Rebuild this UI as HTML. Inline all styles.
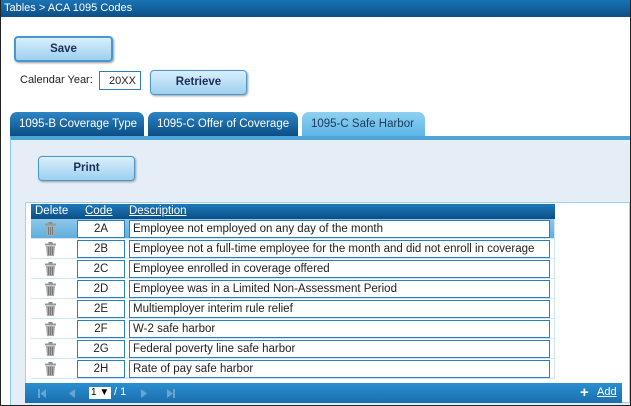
<!DOCTYPE html>
<html><head><style>
*{box-sizing:border-box;margin:0;padding:0}
body{width:631px;height:406px;position:relative;overflow:hidden;background:#fff;font-family:"Liberation Sans",sans-serif;font-size:11px;color:#222}
.frame{position:absolute;left:0;top:0;width:631px;height:406px;border:1px solid #222;border-top:none}
.hdr{position:absolute;left:0;top:0;width:631px;height:17px;background:linear-gradient(#1a73b5,#0b4f86);color:#fff;font-size:11px;padding:2px 4px}
.btn{position:absolute;border:2px solid #4a97cf;border-radius:4px;background:linear-gradient(#d9effb,#9dd0f0);color:#1c2d5a;font-weight:bold;font-size:11.5px;text-align:center;box-shadow:1px 1px 2px #999}
.a{position:absolute}
.tab{position:absolute;top:112px;height:24px;border-radius:7px 7px 0 0;background:linear-gradient(#2c85c4,#0b4e86);color:#fff;font-size:11.5px;padding:6px 0 0 9px}
.panel{position:absolute;left:10px;top:136px;width:621px;height:270px;background:#e5eef7;border-top:4px solid #4ea3d8;border-left:1px solid #8cc8ec}
.tbl{position:absolute;left:25px;top:202px;width:605px;height:201px;background:#fff;border:1px solid #9bd3f1}
.th{position:absolute;left:31px;top:204px;width:524px;height:15px;background:linear-gradient(#1e79ba,#0b4e86);color:#fff;font-size:11.5px}
.row{position:absolute;left:31px;width:524px;height:20px;border-bottom:1px solid #cfe6f5;border-right:1px solid #cfe6f5}
.cell{position:absolute;top:1px;height:18px;border:1px solid #2b7fc0;background:#fff;font-size:11.5px;padding:2px 3px 0}
.trash{position:absolute;left:14px;top:3px;width:11px;height:14px}
.foot{position:absolute;left:25px;top:383px;width:597px;height:20px;background:linear-gradient(#2a8fd0,#1a6eae);color:#fff}
</style></head><body>
<div class="hdr">Tables &gt; ACA 1095 Codes</div>
<div class="btn" style="left:14px;top:36px;width:99px;height:26px;padding-top:5px">Save</div>
<div class="a" style="left:20px;top:74px;font-size:11px">Calendar Year:</div>
<div class="a" style="left:99px;top:71px;width:42px;height:19px;border:1px solid #2b7fc0;font-size:11px;padding:3px 0 0 9px">20XX</div>
<div class="btn" style="left:150px;top:70px;width:97px;height:25px;padding-top:5px;border-width:1px">Retrieve</div>
<div class="tab" style="left:10px;width:134px">1095-B Coverage Type</div>
<div class="tab" style="left:148px;width:150px">1095-C Offer of Coverage</div>
<div class="tab" style="left:302px;width:123px;background:linear-gradient(#8fd0f2,#5db6e6);color:#1c3a5a">1095-C Safe Harbor</div>
<div class="panel"></div>
<div class="btn" style="left:38px;top:156px;width:97px;height:25px;padding-top:5px;border-width:1px">Print</div>
<div class="tbl"></div>
<div class="th"><span class="a" style="left:4px;top:1px">Delete</span><span class="a" style="left:54px;top:1px;text-decoration:underline">Code</span><span class="a" style="left:98px;top:1px;text-decoration:underline">Description</span></div>

<div class="row" style="top:219px;background:linear-gradient(#8ec8ea,#5faedd)"><svg class="trash" viewBox="0 0 11 14"><rect x="3.5" y="0" width="4" height="2" fill="#888"/><rect x="0" y="1.5" width="11" height="2" fill="#999"/><path d="M1 4h9l-1 10H2z" fill="#aaa"/><path d="M3.5 5v8M5.5 5v8M7.5 5v8" stroke="#777"/></svg><div class="cell" style="left:46px;width:48px;text-align:center">2A</div><div class="cell" style="left:98px;width:421px">Employee not employed on any day of the month</div></div>
<div class="row" style="top:239px"><svg class="trash" viewBox="0 0 11 14"><rect x="3.5" y="0" width="4" height="2" fill="#888"/><rect x="0" y="1.5" width="11" height="2" fill="#999"/><path d="M1 4h9l-1 10H2z" fill="#aaa"/><path d="M3.5 5v8M5.5 5v8M7.5 5v8" stroke="#777"/></svg><div class="cell" style="left:46px;width:48px;text-align:center">2B</div><div class="cell" style="left:98px;width:421px">Employee not a full-time employee for the month and did not enroll in coverage</div></div>
<div class="row" style="top:259px"><svg class="trash" viewBox="0 0 11 14"><rect x="3.5" y="0" width="4" height="2" fill="#888"/><rect x="0" y="1.5" width="11" height="2" fill="#999"/><path d="M1 4h9l-1 10H2z" fill="#aaa"/><path d="M3.5 5v8M5.5 5v8M7.5 5v8" stroke="#777"/></svg><div class="cell" style="left:46px;width:48px;text-align:center">2C</div><div class="cell" style="left:98px;width:421px">Employee enrolled in coverage offered</div></div>
<div class="row" style="top:279px"><svg class="trash" viewBox="0 0 11 14"><rect x="3.5" y="0" width="4" height="2" fill="#888"/><rect x="0" y="1.5" width="11" height="2" fill="#999"/><path d="M1 4h9l-1 10H2z" fill="#aaa"/><path d="M3.5 5v8M5.5 5v8M7.5 5v8" stroke="#777"/></svg><div class="cell" style="left:46px;width:48px;text-align:center">2D</div><div class="cell" style="left:98px;width:421px">Employee was in a Limited Non-Assessment Period</div></div>
<div class="row" style="top:299px"><svg class="trash" viewBox="0 0 11 14"><rect x="3.5" y="0" width="4" height="2" fill="#888"/><rect x="0" y="1.5" width="11" height="2" fill="#999"/><path d="M1 4h9l-1 10H2z" fill="#aaa"/><path d="M3.5 5v8M5.5 5v8M7.5 5v8" stroke="#777"/></svg><div class="cell" style="left:46px;width:48px;text-align:center">2E</div><div class="cell" style="left:98px;width:421px">Multiemployer interim rule relief</div></div>
<div class="row" style="top:319px"><svg class="trash" viewBox="0 0 11 14"><rect x="3.5" y="0" width="4" height="2" fill="#888"/><rect x="0" y="1.5" width="11" height="2" fill="#999"/><path d="M1 4h9l-1 10H2z" fill="#aaa"/><path d="M3.5 5v8M5.5 5v8M7.5 5v8" stroke="#777"/></svg><div class="cell" style="left:46px;width:48px;text-align:center">2F</div><div class="cell" style="left:98px;width:421px">W-2 safe harbor</div></div>
<div class="row" style="top:339px"><svg class="trash" viewBox="0 0 11 14"><rect x="3.5" y="0" width="4" height="2" fill="#888"/><rect x="0" y="1.5" width="11" height="2" fill="#999"/><path d="M1 4h9l-1 10H2z" fill="#aaa"/><path d="M3.5 5v8M5.5 5v8M7.5 5v8" stroke="#777"/></svg><div class="cell" style="left:46px;width:48px;text-align:center">2G</div><div class="cell" style="left:98px;width:421px">Federal poverty line safe harbor</div></div>
<div class="row" style="top:359px"><svg class="trash" viewBox="0 0 11 14"><rect x="3.5" y="0" width="4" height="2" fill="#888"/><rect x="0" y="1.5" width="11" height="2" fill="#999"/><path d="M1 4h9l-1 10H2z" fill="#aaa"/><path d="M3.5 5v8M5.5 5v8M7.5 5v8" stroke="#777"/></svg><div class="cell" style="left:46px;width:48px;text-align:center">2H</div><div class="cell" style="left:98px;width:421px">Rate of pay safe harbor</div></div>

<div class="foot">
<svg class="a" style="left:13px;top:6px" width="60" height="9"><path d="M0 0h2v9H0zM8 0v9L2.5 4.5z" fill="#6aa4cf"/><path d="M37 0v9L31 4.5z" fill="#6aa4cf"/></svg>
<div class="a" style="left:64px;top:4px;width:22px;height:12px;background:#fff;color:#000;font-size:10px;padding-left:2px;line-height:12px">1 ▼</div>
<div class="a" style="left:89px;top:3px;font-size:11px">/ 1</div>
<svg class="a" style="left:116px;top:6px" width="40" height="9"><path d="M0 0v9L6 4.5z" fill="#6aa4cf"/><path d="M26 0v9L32 4.5zM32 0h2v9h-2z" fill="#6aa4cf"/></svg>
<div class="a" style="left:555px;top:1px;font-size:15px;font-weight:bold">+</div>
<div class="a" style="left:572px;top:3px;text-decoration:underline">Add</div>
</div>
<div class="frame"></div>
</body></html>
